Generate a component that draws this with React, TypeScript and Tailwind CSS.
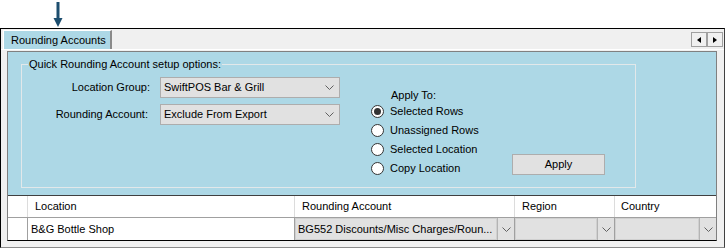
import React from "react";

// small dropdown chevron used by every combo box
const Chevron = () => (
  <svg width="9" height="5" viewBox="0 0 9 5">
    <path d="M0.5 0.5 L4.5 4.5 L8.5 0.5" fill="none" stroke="#606060" strokeWidth="1" />
  </svg>
);

const ComboBox = ({ value }: { value: string }) => (
  <div className="flex h-[21px] w-[180px] items-center justify-between border border-[#adadad] bg-[#e1e1e1] pl-[3px] pr-[5px]">
    <span>{value}</span>
    <Chevron />
  </div>
);

const Radio = ({ label, checked }: { label: string; checked?: boolean }) => (
  <div className="flex h-[19px] items-center gap-[6px]">
    <span className="flex h-[13px] w-[13px] items-center justify-center rounded-full border border-[#333333] bg-white">
      {checked && <span className="h-[7px] w-[7px] rounded-full bg-[#333333]" />}
    </span>
    <span>{label}</span>
  </div>
);

// combo box cell inside the grid
const GridCombo = ({ value, className }: { value?: string; className: string }) => (
  <div className={`flex h-full items-stretch border-r border-[#a0a0a0] bg-[#e1e1e1] ${className}`}>
    <div className="flex flex-1 items-center overflow-hidden whitespace-nowrap border border-[#d0d0d0] pl-[2px]">
      {value}
    </div>
    <div className="flex w-[17px] items-center justify-center border-l border-[#b4b4b4]">
      <Chevron />
    </div>
  </div>
);

export default function App() {
  return (
    <div
      className="flex h-[249px] w-[725px] flex-col bg-white text-[11px] text-black"
      style={{ fontFamily: '"Liberation Sans", Arial, sans-serif' }}
    >
      {/* pointer arrow above the tab */}
      <div className="h-[28px] pl-[53px] pt-[2px]">
        <svg width="10" height="25" viewBox="0 0 10 25">
          <rect x="3.5" y="0" width="3" height="17" fill="#1d4e6f" />
          <path d="M0.5 16 L9.5 16 L5 25 Z" fill="#1d4e6f" />
        </svg>
      </div>

      {/* tab control frame */}
      <div className="flex h-[220px] w-[725px] flex-col border border-black border-b-[#8a8a8a] border-r-[#404040] bg-[#f0f0f0]">
        {/* tab strip */}
        <div className="flex h-[20px] items-start justify-between">
          <div className="ml-[2px] mt-[1px] flex h-[19px] w-[109px] items-center border-l border-t border-white border-r-2 border-r-[#8a8a8a] bg-[#add8e6] pl-[7px]">
            Rounding Accounts
          </div>
          <div className="mr-[1px] mt-[3px] flex">
            <div className="flex h-[15px] w-[16px] items-center justify-center border border-[#a0a0a0] bg-[#f0f0f0]">
              <svg width="4" height="6" viewBox="0 0 4 6">
                <path d="M4 0 L0 3 L4 6 Z" fill="#000" />
              </svg>
            </div>
            <div className="flex h-[15px] w-[16px] items-center justify-center border border-[#a0a0a0] bg-[#f0f0f0]">
              <svg width="4" height="6" viewBox="0 0 4 6">
                <path d="M0 0 L4 3 L0 6 Z" fill="#000" />
              </svg>
            </div>
          </div>
        </div>

        {/* tab page */}
        <div className="flex-1 border-t border-white pl-[6px] pt-[1px]">
          <div className="flex h-[190px] w-[710px] flex-col border border-[#808080] border-b-black">
            {/* blue setup area */}
            <div className="h-[143px] bg-[#add8e6] pl-[13px] pt-[12px]">
              <div className="relative h-[124px] w-[615px] border border-[#e2e8ea]">
                <span className="absolute -top-[7px] left-[6px] bg-[#add8e6] px-[1px] leading-[13px]">
                  Quick Rounding Account setup options:
                </span>
                <div className="flex">
                  <div className="mt-[12px] grid grid-cols-[128px_180px] gap-x-[10px] gap-y-[6px] self-start">
                    <div className="flex items-center justify-end">Location Group:</div>
                    <ComboBox value="SwiftPOS Bar & Grill" />
                    <div className="flex items-center justify-end pr-[2px]">Rounding Account:</div>
                    <ComboBox value="Exclude From Export" />
                  </div>
                  <div className="ml-[31px] mt-[23px] w-[141px]">
                    <div className="h-[14px] pl-[20px] leading-[14px]">Apply To:</div>
                    <Radio label="Selected Rows" checked />
                    <Radio label="Unassigned Rows" />
                    <Radio label="Selected Location" />
                    <Radio label="Copy Location" />
                  </div>
                  <div className="mt-[89px] flex h-[21px] w-[93px] items-center justify-center border border-[#adadad] bg-[#e1e1e1]">
                    Apply
                  </div>
                </div>
              </div>
            </div>

            {/* grid */}
            <div className="flex flex-1 flex-col border-t border-[#404040] bg-white">
              <div className="flex h-[22px] border-b border-[#a0a0a0]">
                <div className="w-[20px] border-r border-[#dcdcdc]" />
                <div className="flex w-[267px] items-center border-r border-[#dcdcdc] pl-[7px]">Location</div>
                <div className="flex w-[220px] items-center border-r border-[#dcdcdc] pl-[7px]">Rounding Account</div>
                <div className="flex w-[100px] items-center border-r border-[#dcdcdc] pl-[7px]">Region</div>
                <div className="flex flex-1 items-center pl-[6px]">Country</div>
              </div>
              <div className="flex flex-1">
                <div className="w-[20px] border-r border-[#a0a0a0]" />
                <div className="flex w-[267px] items-center border-r border-[#a0a0a0] pl-[3px]">B&amp;G Bottle Shop</div>
                <GridCombo value="BG552 Discounts/Misc Charges/Roun..." className="w-[220px]" />
                <GridCombo className="w-[100px]" />
                <div className="flex flex-1 items-stretch bg-[#e1e1e1]">
                  <div className="flex-1 border border-[#d0d0d0]" />
                  <div className="flex w-[17px] items-center justify-center border-l border-[#b4b4b4]">
                    <Chevron />
                  </div>
                </div>
              </div>
            </div>
          </div>
        </div>
      </div>
    </div>
  );
}
